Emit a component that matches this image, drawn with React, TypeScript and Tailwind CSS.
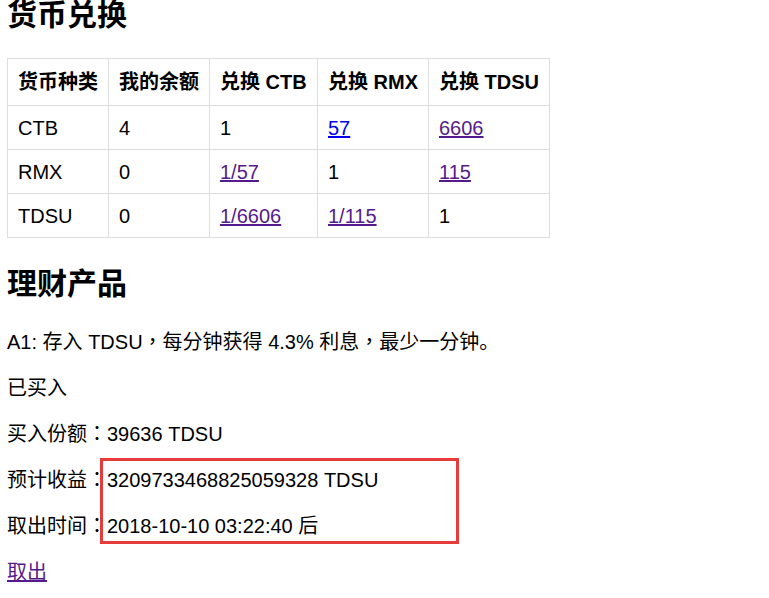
import React from "react";

type Rate = { text: string; href?: boolean; visited?: boolean };

const rows: { name: string; balance: string; rates: Rate[] }[] = [
  { name: "CTB", balance: "4", rates: [{ text: "1" }, { text: "57", href: true }, { text: "6606", href: true, visited: true }] },
  { name: "RMX", balance: "0", rates: [{ text: "1/57", href: true, visited: true }, { text: "1" }, { text: "115", href: true, visited: true }] },
  { name: "TDSU", balance: "0", rates: [{ text: "1/6606", href: true, visited: true }, { text: "1/115", href: true, visited: true }, { text: "1" }] },
];

const headers = ["货币种类", "我的余额", "兑换 CTB", "兑换 RMX", "兑换 TDSU"];
const widths = ["w-[101px]", "w-[101px]", "w-[108px]", "w-[111px]", "w-[121px]"];

// 全角标点居中显示
const P = ({ c }: { c: string }) => (
  <span className="leading-[0px]" style={{ fontFamily: '"Noto Sans CJK TC", sans-serif' }}>{c}</span>
);

export default function App() {
  return (
    <div
      className="h-[598px] overflow-hidden bg-white px-[7px] text-black"
      style={{ fontFamily: '"Liberation Sans", Arial, "Noto Sans CJK SC", sans-serif' }}
    >
      <h1 className="text-[30px] font-bold leading-[30px]">货币兑换</h1>

      <table className="mt-[28px] border-collapse text-[20px]">
        <thead>
          <tr>
            {headers.map((h, i) => (
              <th key={h} className={`${widths[i]} h-[47px] border border-[#dddddd] px-[10px] text-left font-bold`}>
                {h}
              </th>
            ))}
          </tr>
        </thead>
        <tbody>
          {rows.map((r) => (
            <tr key={r.name}>
              <td className="h-[44px] border border-[#dddddd] px-[10px]">{r.name}</td>
              <td className="h-[44px] border border-[#dddddd] px-[10px]">{r.balance}</td>
              {r.rates.map((c, i) => (
                <td key={i} className="h-[44px] border border-[#dddddd] px-[10px]">
                  {c.href ? (
                    <a href="#" className={`underline ${c.visited ? "text-[#551a8b]" : "text-[#0000ee]"}`}>
                      {c.text}
                    </a>
                  ) : (
                    c.text
                  )}
                </td>
              ))}
            </tr>
          ))}
        </tbody>
      </table>

      <h2 className="mt-[31px] text-[30px] font-bold leading-[30px]">理财产品</h2>

      <div className="text-[20px] leading-[26px]">
        <p className="mt-[30px]">
          A1: 存入 TDSU<P c="，" />每分钟获得 4.3% 利息<P c="，" />最少一分钟。
        </p>
        <p className="mt-[20px]">已买入</p>
        <p className="mt-[20px]">
          买入份额<P c="：" />39636 TDSU
        </p>
        <div className="relative mt-[20px]">
          <p>
            预计收益<P c="：" />3209733468825059328 TDSU
          </p>
          <p className="mt-[20px]">
            取出时间<P c="：" />2018-10-10 03:22:40 后
          </p>
          {/* 标注框 */}
          <div className="pointer-events-none absolute left-[93px] top-[-9px] h-[86px] w-[359px] border-[3px] border-[#e53b3b]" />
        </div>
        <p className="mt-[20px]">
          <a href="#" className="text-[#551a8b] underline">取出</a>
        </p>
      </div>
    </div>
  );
}
